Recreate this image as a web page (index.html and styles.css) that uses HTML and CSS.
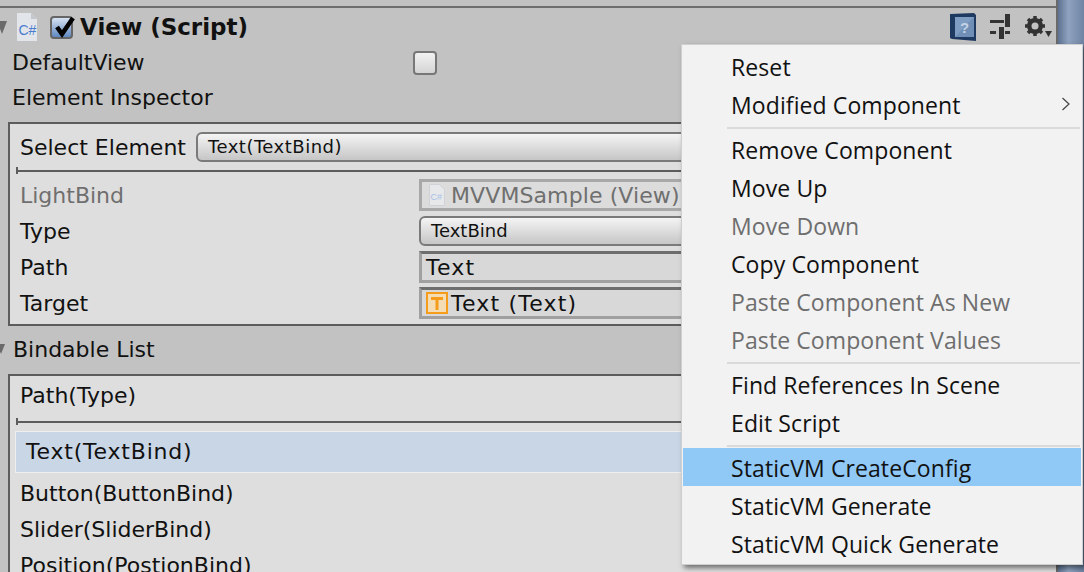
FILE: index.html
```html
<!DOCTYPE html>
<html lang="en">
<head>
  <meta charset="UTF-8" />
  <title>View (Script) Inspector</title>
  <link rel="stylesheet" href="styles.css">
</head>
<body>
  <div class="inspector">
    <div class="panel">
      <div class="comp-header">
        <span class="fold"></span>
        <svg class="file-icon" width="20" height="28" viewBox="0 0 20 28">
          <path d="M0 0h14l6 6v22H0z" fill="#e2e6ea"/>
          <path d="M14 0v6h6z" fill="#c4c8cc"/>
          <text x="1.500" y="22" font-family="Liberation Sans" font-size="14" fill="#4a7cd0">C#</text>
        </svg>
        <span class="enable-check">
          <svg width="26" height="26" viewBox="0 0 26 26"><path d="M5 12l5 7L21 3" fill="none" stroke="#000" stroke-width="4.500"/></svg>
        </span>
        <span class="comp-title">View (Script)</span>
        <span class="comp-tools">
          <svg width="26" height="28" viewBox="0 0 26 28">
            <path d="M0 1l24-1 2 2v26L2 26 0 25z" fill="#1f3a60"/>
            <rect x="5" y="4" width="19" height="20" fill="#6f8fb6"/>
            <path d="M5 4h19L5 24z" fill="#7f9dc2"/>
            <text x="10" y="20" font-family="Liberation Sans" font-weight="bold" font-size="15" fill="#c4d2e4">?</text>
          </svg>
          <svg width="21" height="26" viewBox="0 0 21 26" fill="#333">
            <rect x="0" y="6" width="14" height="3"/><rect x="15" y="0" width="5" height="13"/>
            <rect x="0" y="17" width="6" height="3"/><rect x="9" y="13" width="5" height="12"/><rect x="15" y="17" width="5" height="3"/>
          </svg>
          <svg width="28" height="26" viewBox="0 0 28 26">
            <circle cx="10" cy="12" r="6" fill="none" stroke="#333" stroke-width="4"/>
            <path d="M10 2v20M0 12h20M3 5l14 14M17 5L3 19" stroke="#333" stroke-width="3.500"/>
            <circle cx="10" cy="12" r="3.500" fill="#c2c2c2"/>
            <path d="M20 17h7l-3.500 6z" fill="#333"/>
          </svg>
        </span>
      </div>

      <div class="prop-row">
        <span class="prop-label">DefaultView</span>
        <span class="toggle"></span>
      </div>
      <div class="prop-row">Element Inspector</div>

      <div class="box">
        <div class="select-row">
          <span class="select-label">Select Element</span>
          <span class="dropdown tight">Text(TextBind)</span>
        </div>
        <div class="splitter"></div>
        <div class="field-row muted">
          <span class="field-label">LightBind</span>
          <span class="object-field shifted">
            <svg width="16" height="22" viewBox="0 0 16 22">
              <path d="M.5 .5h10l5 5v16H.5z" fill="#e6e8ea" stroke="#cfd3d8"/>
              <text x="1.500" y="16" font-family="Liberation Sans" font-size="9" fill="#a9c0e6">C#</text>
            </svg>
            <span class="obj-name">MVVMSample (View)</span>
          </span>
        </div>
        <div class="field-row">
          <span class="field-label">Type</span>
          <span class="dropdown">TextBind</span>
        </div>
        <div class="field-row">
          <span class="field-label">Path</span>
          <span class="object-field active"><span class="wide">Text</span></span>
        </div>
        <div class="field-row">
          <span class="field-label">Target</span>
          <span class="object-field active">
            <svg width="22" height="22" viewBox="0 0 22 22">
              <rect x="1" y="1" width="20" height="20" fill="#f4dcb4" stroke="#f59c1a" stroke-width="2"/>
              <path d="M5 5h12v3h-4.500v10h-3V8H5z" fill="#f59c1a"/>
            </svg>
            <span class="wide target-name">Text (Text)</span>
          </span>
        </div>
      </div>

      <div class="list-title"><span class="fold small"></span>Bindable List</div>

      <div class="box list">
        <div class="list-head">Path(Type)</div>
        <div class="splitter"></div>
        <div class="list-item selected">Text(TextBind)</div>
        <div class="list-item">Button(ButtonBind)</div>
        <div class="list-item">Slider(SliderBind)</div>
        <div class="list-item">Position(PostionBind)</div>
      </div>
    </div>
    <div class="scrollbar"></div>
  </div>

  <div class="menu">
    <div class="menu-item">Reset</div>
    <div class="menu-item">Modified Component
      <svg class="chevron" width="10" height="14" viewBox="0 0 10 14"><path d="M1.500 1l6.500 6-6.500 6" fill="none" stroke="#444" stroke-width="1.200"/></svg>
    </div>
    <div class="menu-sep"></div>
    <div class="menu-item">Remove Component</div>
    <div class="menu-item">Move Up</div>
    <div class="menu-item disabled">Move Down</div>
    <div class="menu-item">Copy Component</div>
    <div class="menu-item disabled">Paste Component As New</div>
    <div class="menu-item disabled">Paste Component Values</div>
    <div class="menu-sep"></div>
    <div class="menu-item">Find References In Scene</div>
    <div class="menu-item">Edit Script</div>
    <div class="menu-sep"></div>
    <div class="menu-item hover">StaticVM CreateConfig</div>
    <div class="menu-item">StaticVM Generate</div>
    <div class="menu-item">StaticVM Quick Generate</div>
  </div>
</body>
</html>
```

FILE: styles.css
```css
html, body {
  margin: 0;
  height: 572px;
  overflow: hidden;
}

body {
  font-family: "DejaVu Sans", sans-serif;
  font-size: 22px;
  color: #111;
  background: #c2c2c2;
}

.inspector {
  display: flex;
  height: 572px;
}

.panel {
  flex: 1;
  padding-top: 6px;
  border-right: 2px solid #6a6a6a;
  overflow: hidden;
}

.scrollbar {
  width: 26px;
  background: linear-gradient(90deg, #5d7290, #8fa3c0 40%, #6f84a3);
}

.comp-header {
  display: flex;
  align-items: center;
  height: 39px;
  padding-top: 1px;
  border-top: 2px solid #6e6e6e;
  box-sizing: border-box;
}

.fold {
  width: 0;
  height: 0;
  border-left: 5.500px solid transparent;
  border-right: 5.500px solid transparent;
  border-top: 13px solid #6a6a6a;
  margin-left: -3px;
  margin-right: 10px;
}

.fold.small {
  border-left-width: 4px;
  border-right-width: 4px;
  border-top-width: 10px;
  margin-right: 8px;
}

.file-icon {
  margin-right: 13px;
}

.enable-check {
  width: 19px;
  height: 19px;
  border: 2px solid #666;
  border-radius: 4px;
  background: linear-gradient(#d6e2f3, #5f88c0);
  margin-right: 7px;
  position: relative;
}

.enable-check svg {
  position: absolute;
  left: 0;
  top: -3px;
}

.comp-title {
  font-weight: bold;
  font-size: 23px;
  color: #111;
}

.comp-tools {
  margin-left: auto;
  display: flex;
  align-items: center;
  gap: 14px;
  padding-right: 3px;
}

.prop-row {
  display: flex;
  align-items: center;
  height: 35px;
  padding-left: 12px;
}

.prop-label {
  width: 401px;
}

.toggle {
  width: 20px;
  height: 20px;
  border: 2px solid #777;
  border-radius: 4px;
  background: linear-gradient(#f2f2f2, #d4d4d4);
}

.box {
  margin: 7px 0 0 8px;
  width: 1100px;
  border: 2px solid #5c5c5c;
  background: #dedede;
  box-sizing: border-box;
  height: 204px;
}

.select-row {
  display: flex;
  align-items: center;
  height: 46px;
  padding: 0 10px;
}

.select-label {
  width: 176px;
}

.dropdown {
  flex: 1;
  height: 26px;
  line-height: 26px;
  border: 2px solid #7a7a7a;
  border-radius: 6px;
  background: linear-gradient(#f4f4f4, #c6c6c6);
  font-size: 18px;
  padding-left: 10px;
}

.dropdown.tight {
  letter-spacing: 0.5px;
}

.splitter {
  height: 2px;
  margin-left: 6px;
  background: #5c5c5c;
  position: relative;
}

.splitter::before {
  content: "";
  position: absolute;
  left: 0;
  top: -3px;
  width: 2px;
  height: 7px;
  background: #5c5c5c;
}

.field-row {
  display: flex;
  align-items: center;
  height: 36px;
  padding-left: 10px;
}

.field-row.muted {
  margin-top: 5px;
  color: #6f6f6f;
}

.field-label {
  width: 399px;
}

.object-field {
  flex: 1;
  display: flex;
  align-items: center;
  gap: 2px;
  height: 26px;
  border: 3px solid #a8a8a8;
  background: #dcdcdc;
  padding-left: 4px;
}

.object-field.shifted {
  padding-left: 7px;
}

.obj-name {
  margin-left: 4px;
  letter-spacing: 0.1px;
}

.object-field.active {
  border-color: #a0a0a0;
  border-top-color: #6e6e6e;
  background: #d8d8d8;
  color: #111;
}

.wide {
  letter-spacing: 1.200px;
}

.target-name {
  margin-left: 1px;
}

.list-title {
  display: flex;
  align-items: center;
  height: 46px;
}

.box.list {
  margin-top: 2px;
  height: 300px;
}

.list-head {
  height: 45px;
  line-height: 40px;
  padding-left: 10px;
}

.list-item {
  height: 36px;
  line-height: 36px;
  padding-left: 10px;
}

.list-item.selected {
  height: 40px;
  line-height: 40px;
  margin: 8px 0 3px 5px;
  padding-left: 10px;
  letter-spacing: 0.8px;
  background: #c9d6e6;
  border: 1px solid #efefef;
}

.menu {
  position: absolute;
  left: 681px;
  top: 44px;
  width: 402px;
  height: 521px;
  box-sizing: border-box;
  padding: 3px 1px 0;
  background: #f2f2f2;
  border: 1px solid #cfcfcf;
  box-shadow: 3px 3px 5px rgba(0, 0, 0, 0.5);
  font-family: "Open Sans", sans-serif;
  font-size: 23px;
  letter-spacing: 0.1px;
  color: #111;
}

.menu-item {
  position: relative;
  height: 38px;
  line-height: 38px;
  padding-left: 48px;
}

.menu-item.disabled {
  color: #6e6e6e;
}

.menu-item.hover {
  margin: -1px 0 1px;
  line-height: 40px;
  background: #90c8f6;
}

.chevron {
  position: absolute;
  right: 10px;
  top: 11px;
}

.menu-sep {
  height: 2px;
  margin: 3px 1px 2px 44px;
  background: #dadada;
}
```
